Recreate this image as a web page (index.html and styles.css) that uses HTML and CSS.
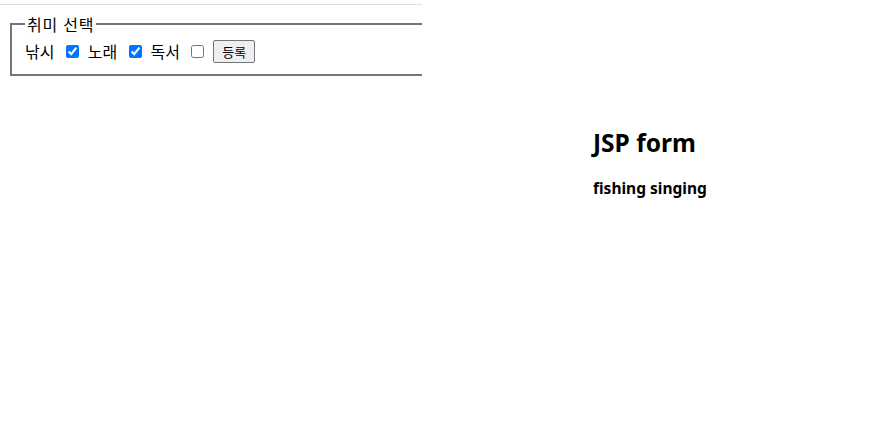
FILE: index.html
```html
<!DOCTYPE html>
<html lang="ko">
<head>
<meta charset="utf-8">
<title>JSP form</title>
<link rel="stylesheet" href="styles.css">
</head>
<body>
<div class="page">
  <div class="left">
    <div class="rule"></div>
    <form class="form">
      <fieldset class="box">
        <legend class="legend">취미 선택</legend>
        <div class="row">
          <span class="lbl">낚시</span>
          <input class="cb" type="checkbox" checked>
          <span class="lbl">노래</span>
          <input class="cb" type="checkbox" checked>
          <span class="lbl">독서</span>
          <input class="cb" type="checkbox">
          <button class="btn" type="button">등록</button>
        </div>
      </fieldset>
    </form>
  </div>
  <div class="right">
    <h2 class="title">JSP form</h2>
    <h4 class="result">fishing singing</h4>
  </div>
</div>
</body>
</html>
```
FILE: styles.css
```css
html, body {
  margin: 0;
  padding: 0;
  background: #fff;
}
body {
  font-family: "Noto Sans CJK KR", "Noto Sans", sans-serif;
  color: #000;
}
.page {
  display: flex;
  align-items: flex-start;
}
.left {
  width: 422px;
  flex: none;
  overflow: hidden;
}
.rule {
  height: 1px;
  margin-top: 4px;
  background: #dedede;
}
.form {
  padding: 9px 0 0 10px;
  width: 800px;
}
.box {
  margin: 0;
  border: 2px solid #767676;
  padding: 0 12px 6px 12px;
}
.legend {
  padding: 0 2px;
  margin-left: 1px;
  font-size: 16px;
  line-height: 20px;
  letter-spacing: 0.8px;
  color: #000;
}
.row {
  display: flex;
  align-items: center;
  height: 34px;
  padding-left: 1px;
}
.lbl {
  font-size: 16px;
  line-height: 20px;
  letter-spacing: 0.15px;
}
.cb {
  width: 13px;
  height: 13px;
  margin: 0 9px 0 11px;
  accent-color: #0075ff;
}
.btn {
  font-family: "Noto Sans CJK KR", sans-serif;
  font-size: 13px;
  line-height: 17px;
  height: 23px;
  width: 42px;
  padding: 0 5px;
  margin: 0;
  border: 1px solid #767676;
  border-radius: 2px;
  background: #efefef;
  color: #000;
}
.right {
  padding: 129px 0 0 171px;
}
.title {
  margin: 0;
  font-family: "Noto Sans", sans-serif;
  font-size: 24.5px;
  font-weight: 700;
  line-height: 28px;
}
.result {
  margin: 21px 0 0 0;
  font-family: "Noto Sans", sans-serif;
  font-size: 15.5px;
  font-weight: 700;
  line-height: 20px;
}
```
